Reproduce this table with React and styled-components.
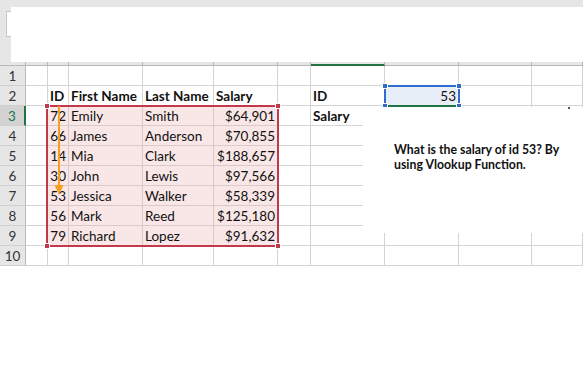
import React from "react";
import styled, { createGlobalStyle } from "styled-components";

const GlobalStyle = createGlobalStyle`
  html, body { margin: 0; padding: 0; background: #ffffff; }
  body { font-family: "Lato", "Liberation Sans", sans-serif; }
  * { box-sizing: border-box; }
`;

const Page = styled.div`
  position: relative;
  width: 583px;
  height: 378px;
  overflow: hidden;
  background: #ffffff;
`;

const FormulaArea = styled.div`
  display: flex;
  align-items: flex-start;
  height: 62px;
  padding: 7px 0 0 6px;
  background: #e6e6e6;
`;

const NameStub = styled.div`
  width: 5px;
  height: 26px;
  margin-top: 4px;
  background: #ffffff;
  border: 1px solid #c6c6c6;
  border-right: none;
`;

const FormulaPanel = styled.div`
  flex: 1;
  height: 55px;
  background: #ffffff;
`;

const COLS = [26, 22, 21, 74, 71, 64, 33, 74, 74, 73];

const Sheet = styled.div`
  display: grid;
  grid-template-columns: ${COLS.map((c) => c + "px").join(" ")} 1fr;
  grid-template-rows: 4px repeat(10, 20px);
`;

const ColHead = styled.div`
  background: #e6e6e6;
  border-right: 1px solid #b8b8b8;
  border-bottom: ${(p) => (p.$active ? "2px solid #217346" : "1px solid #b8b8b8")};
`;

const RowHead = styled.div`
  display: flex;
  align-items: center;
  justify-content: center;
  background: ${(p) => (p.$active ? "#d2d2d2" : "#e6e6e6")};
  border-bottom: 1px solid #cfcfcf;
  border-right: ${(p) => (p.$active ? "2px solid #217346" : "1px solid #b8b8b8")};
  color: ${(p) => (p.$active ? "#217346" : "#333333")};
  font-size: 13.5px;
  line-height: 19px;
  padding-top: 2px;
`;

const Cell = styled.div`
  display: flex;
  align-items: flex-end;
  justify-content: ${(p) => (p.$align === "right" ? "flex-end" : "flex-start")};
  padding: 0 2px 0 2px;
  background: ${(p) => (p.$fill ? "#f9e7e8" : "#ffffff")};
  border-right: 1px solid ${(p) => (p.$fill ? "#dac9ca" : "#d4d4d4")};
  border-bottom: 1px solid ${(p) => (p.$fill ? "#dac9ca" : "#d4d4d4")};
  font-size: 13.5px;
  line-height: 17px;
  font-weight: ${(p) => (p.$bold ? 700 : 400)};
  color: #111111;
  white-space: nowrap;
  overflow: visible;
`;

const RangeBox = styled.div`
  position: absolute;
  left: 46px;
  top: 105px;
  width: 233px;
  height: 142px;
  border: 2px solid #c3394c;
  pointer-events: none;
`;

const Handle = styled.div`
  position: absolute;
  width: 6px;
  height: 6px;
  background: ${(p) => p.$color};
  border: 1px solid #ffffff;
  ${(p) => (p.$top ? "top: -4px;" : "bottom: -4px;")}
  ${(p) => (p.$left ? "left: -4px;" : "right: -4px;")}
`;

const SelectBox = styled.div`
  position: absolute;
  left: 384px;
  top: 85px;
  width: 76px;
  height: 22px;
  background: #e8eef8;
  border: 2px solid #2f6ccd;
  border-bottom: 2px solid #217346;
  display: flex;
  align-items: flex-end;
  justify-content: flex-end;
  padding: 0 2px 0 0;
  font-size: 13.5px;
  line-height: 17px;
  color: #111111;
`;

const ArrowSvg = styled.svg`
  position: absolute;
  left: 53px;
  top: 106px;
`;

const TextBox = styled.div`
  position: absolute;
  left: 363px;
  top: 107px;
  width: 220px;
  height: 126px;
  background: #ffffff;
  padding: 35px 0 0 31px;
  font-size: 12.3px;
  line-height: 15px;
  font-weight: 700;
  color: #111111;
`;

const Dot = styled.div`
  position: absolute;
  left: 568px;
  top: 107px;
  width: 2px;
  height: 2px;
  background: #555555;
`;

const data = [
  ["72", "Emily", "Smith", "$64,901"],
  ["66", "James", "Anderson", "$70,855"],
  ["14", "Mia", "Clark", "$188,657"],
  ["30", "John", "Lewis", "$97,566"],
  ["53", "Jessica", "Walker", "$58,339"],
  ["56", "Mark", "Reed", "$125,180"],
  ["79", "Richard", "Lopez", "$91,632"],
];

function buildRow(r) {
  const cells = Array.from({ length: 10 }, () => ({ text: "" }));
  if (r === 2) {
    cells[1] = { text: "ID", bold: true };
    cells[2] = { text: "First Name", bold: true };
    cells[3] = { text: "Last Name", bold: true };
    cells[4] = { text: "Salary", bold: true };
    cells[6] = { text: "ID", bold: true };
  }
  if (r >= 3 && r <= 9) {
    const d = data[r - 3];
    cells[1] = { text: d[0], align: "right", fill: true };
    cells[2] = { text: d[1], fill: true };
    cells[3] = { text: d[2], fill: true };
    cells[4] = { text: d[3], align: "right", fill: true };
  }
  if (r === 3) cells[6] = { text: "Salary", bold: true };
  return cells;
}

export default function App() {
  const rows = Array.from({ length: 10 }, (_, i) => i + 1);
  return (
    <Page>
      <GlobalStyle />
      <FormulaArea>
        <NameStub />
        <FormulaPanel />
      </FormulaArea>
      <Sheet>
        <ColHead />
        {COLS.slice(1).map((_, i) => (
          <ColHead key={"h" + i} $active={i === 6} />
        ))}
        <ColHead />
        {rows.map((r) => (
          <React.Fragment key={r}>
            <RowHead $active={r === 3}>{r}</RowHead>
            {buildRow(r)
              .slice(0, 9)
              .map((c, ci) => (
                <Cell key={ci} $align={c.align} $bold={c.bold} $fill={c.fill}>
                  {c.text}
                </Cell>
              ))}
            <Cell />
          </React.Fragment>
        ))}
      </Sheet>

      <RangeBox>
        <Handle $color="#c3394c" $top $left />
        <Handle $color="#c3394c" $top />
        <Handle $color="#c3394c" $left />
        <Handle $color="#c3394c" />
      </RangeBox>

      <ArrowSvg width="12" height="92" viewBox="0 0 12 92">
        <line x1="6" y1="0" x2="6" y2="80" stroke="#f5a01c" strokeWidth="2" />
        <polygon points="1.5,79 10.5,79 6,89" fill="#f5a01c" />
      </ArrowSvg>

      <SelectBox>
        53
        <Handle $color="#2f6ccd" $top $left />
        <Handle $color="#2f6ccd" $top />
        <Handle $color="#2f6ccd" $left />
        <Handle $color="#2f6ccd" />
      </SelectBox>

      <TextBox>
        What is the salary of id 53? By
        <br />
        using Vlookup Function.
      </TextBox>
      <Dot />
    </Page>
  );
}
